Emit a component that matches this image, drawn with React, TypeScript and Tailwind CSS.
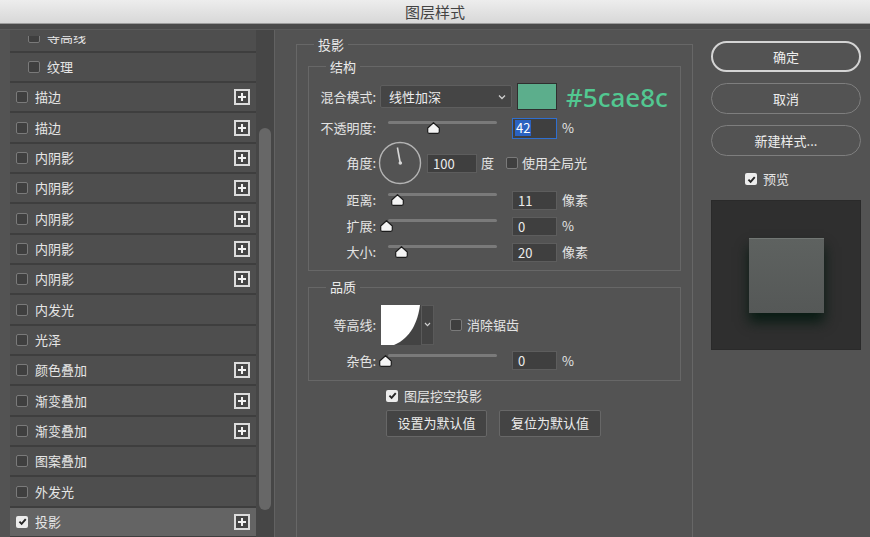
import React from 'react';

type LayerRow = { label: string; sub?: boolean; plus?: boolean; checked?: boolean };

const layerRows: LayerRow[] = [
  { label: '等高线', sub: true },
  { label: '纹理', sub: true },
  { label: '描边', plus: true },
  { label: '描边', plus: true },
  { label: '内阴影', plus: true },
  { label: '内阴影', plus: true },
  { label: '内阴影', plus: true },
  { label: '内阴影', plus: true },
  { label: '内阴影', plus: true },
  { label: '内发光' },
  { label: '光泽' },
  { label: '颜色叠加', plus: true },
  { label: '渐变叠加', plus: true },
  { label: '渐变叠加', plus: true },
  { label: '图案叠加' },
  { label: '外发光' },
  { label: '投影', plus: true, checked: true },
];

function Check({ checked }: { checked?: boolean }) {
  if (checked) {
    return (
      <span className="w-[12px] h-[12px] rounded-[2px] bg-[#ececec] flex items-center justify-center shrink-0">
        <svg width="9" height="9" viewBox="0 0 10 10">
          <path d="M1.6 5.2 L4 7.6 L8.6 2.3" fill="none" stroke="#262626" strokeWidth="2.1" />
        </svg>
      </span>
    );
  }
  return <span className="block w-[12px] h-[12px] rounded-[2px] border border-[#7a7a7a] bg-[#3f3f3f] shrink-0" />;
}

function PlusBox() {
  return (
    <span className="w-[16px] h-[16px] border-2 border-[#dcdcdc] bg-[#464646] flex items-center justify-center shrink-0">
      <svg width="10" height="10" viewBox="0 0 10 10">
        <path d="M5 1v8M1 5h8" stroke="#f2f2f2" strokeWidth="2" />
      </svg>
    </span>
  );
}

function Slider({ thumb }: { thumb: string }) {
  return (
    <div className="relative w-[111px] h-[20px] shrink-0">
      <div className="absolute left-[2px] right-0 top-[3px] h-[3px] rounded-full bg-[#7a7a7a]" />
      <svg className={`absolute top-[4px] ${thumb}`} width="13" height="12" viewBox="0 0 13 12">
        <path
          d="M6.5 0.7 L12.3 6 V9.8 Q12.3 11.3 10.8 11.3 H2.2 Q0.7 11.3 0.7 9.8 V6 Z"
          fill="#f4f4f4"
          stroke="#1c1c1c"
          strokeWidth="1.2"
        />
      </svg>
    </div>
  );
}

function NumBox({ value, width = 'w-[45px]' }: { value: string; width?: string }) {
  return (
    <div className={`${width} h-[19px] bg-[#3f3f3f] border border-[#5d5d5d] pl-[5px] text-[13px] leading-[17px] text-[#ececec] shrink-0`}>
      {value}
    </div>
  );
}

function Label({ text }: { text: string }) {
  return <div className="w-[67px] text-right shrink-0">{text}</div>;
}

function SliderRow({ label, value, unit, thumb, gap }: { label: string; value: string; unit: string; thumb: string; gap: string }) {
  return (
    <div className={`flex items-center h-[20px] ${gap}`}>
      <Label text={label} />
      <div className="ml-[10px]">
        <Slider thumb={thumb} />
      </div>
      <div className="ml-[15px]">
        <NumBox value={value} />
      </div>
      <span className="ml-[5px]">{unit}</span>
    </div>
  );
}

function RoundButton({ text, strong }: { text: string; strong?: boolean }) {
  return (
    <div
      className={`w-[150px] h-[31px] rounded-full flex items-center justify-center text-[13px] text-[#eeeeee] ${
        strong ? 'border-2 border-[#d4d4d4]' : 'border-[1.5px] border-[#7e7e7e]'
      }`}
    >
      {text}
    </div>
  );
}

export default function App() {
  return (
    <div className="w-[870px] h-[537px] overflow-hidden bg-[#535353] flex flex-col text-[13px] leading-[16px] text-[#e4e4e4] font-['Noto_Sans_CJK_SC','Noto_Sans',sans-serif]">
      <div className="h-[24px] shrink-0 bg-gradient-to-b from-[#ededed] to-[#d8d8d8] border-b border-[#9c9c9c] flex items-center justify-center text-[15px] text-[#434343]">
        图层样式
      </div>
      <div className="h-[6px] shrink-0 bg-[#4a4a4a] border-b border-[#5a5a5a]" />

      <div className="flex flex-1 min-h-0">
        {/* layer effect list */}
        <div className="w-[275px] shrink-0 flex pl-[10px] border-r border-[#626262]">
          <div className="w-[246px] flex flex-col bg-[#4e4e4e] pt-[6px]">
            <div className="flex-1 min-h-0 overflow-hidden bg-[#3e3e3e]">
              <div className="-mt-[13.5px]">
                {layerRows.map((r, i) => (
                  <div
                    key={i}
                    className={`h-[30.33px] border-b-2 border-[#3e3e3e] flex items-center pr-[6px] ${
                      r.sub ? 'pl-[18px]' : 'pl-[6px]'
                    } ${r.checked ? 'bg-[#646464]' : 'bg-[#4e4e4e]'}`}
                  >
                    <Check checked={r.checked} />
                    <span className="ml-[7px] flex-1 text-[#e6e6e6]">{r.label}</span>
                    {r.plus && <PlusBox />}
                  </div>
                ))}
              </div>
            </div>
          </div>
          <div className="w-[18px] bg-[#464646] pl-[3px] pt-[98px]">
            <div className="w-[12px] h-[382px] rounded-full bg-[#676767]" />
          </div>
        </div>

        {/* settings */}
        <div className="w-[418px] shrink-0 pt-[6.5px]">
          <fieldset className="ml-[21px] w-[397px] h-[520px] border border-[#676767]">
            <legend className="ml-[17px] px-[4px] leading-[16px] text-[#ebebeb]">投影</legend>

            <fieldset className="ml-[11px] mt-[6px] w-[373px] border border-[#676767] pb-[8px]">
              <legend className="ml-[17px] px-[4px] leading-[16px] text-[#ebebeb]">结构</legend>

              <div className="flex items-center h-[27px] mt-[8.5px]">
                <Label text="混合模式:" />
                <div className="ml-[4px] w-[132px] h-[23px] bg-[#454545] border border-[#5e5e5e] rounded-[2px] flex items-center pl-[8px] pr-[5px] text-[#ececec]">
                  <span className="flex-1">线性加深</span>
                  <svg width="8" height="6" viewBox="0 0 8 6">
                    <path d="M1 1.5 L4 4.5 L7 1.5" fill="none" stroke="#cfcfcf" strokeWidth="1.3" />
                  </svg>
                </div>
                <div className="ml-[5px] w-[40px] h-[27px] bg-[#5cae8c] border border-[#2f2f2f] shrink-0" />
                <span className="ml-[9px] font-['Noto_Sans',sans-serif] font-medium text-[26px] leading-[28px] text-[#52c891]">
                  #5cae8c
                </span>
              </div>

              <div className="flex items-center h-[20px] mt-[8px]">
                <Label text="不透明度:" />
                <div className="ml-[10px]">
                  <Slider thumb="left-[40.5px]" />
                </div>
                <div className="ml-[15px] w-[45px] h-[21px] bg-[#3f3f3f] border border-[#2f6fd0] flex items-center pl-[2px] shrink-0">
                  <span className="bg-[#2b62c0] text-white px-[1px] leading-[16px]">42</span>
                </div>
                <span className="ml-[5px]">%</span>
              </div>

              <div className="flex items-center h-[44px] mt-[3px]">
                <Label text="角度:" />
                <svg className="ml-[2px] shrink-0" width="44" height="44" viewBox="0 0 44 44">
                  <circle cx="22" cy="22" r="20.5" fill="none" stroke="#b4b4b4" strokeWidth="1.4" />
                  <path d="M22.3 22 L19.4 6.5" stroke="#d8d8d8" strokeWidth="1.6" />
                  <circle cx="22.3" cy="22" r="1.8" fill="#d8d8d8" />
                </svg>
                <div className="ml-[5px]">
                  <NumBox value="100" width="w-[50px]" />
                </div>
                <span className="ml-[4px]">度</span>
                <div className="ml-[12px]">
                  <Check />
                </div>
                <span className="ml-[4px]">使用全局光</span>
              </div>

              <SliderRow label="距离:" value="11" unit="像素" thumb="left-[4.5px]" gap="mt-[5px]" />
              <SliderRow label="扩展:" value="0" unit="%" thumb="-left-[6.5px]" gap="mt-[6px]" />
              <SliderRow label="大小:" value="20" unit="像素" thumb="left-[9px]" gap="mt-[6px]" />
            </fieldset>

            <fieldset className="ml-[11px] mt-[8px] w-[373px] border border-[#676767] pb-[9px]">
              <legend className="ml-[17px] px-[4px] leading-[16px] text-[#ebebeb]">品质</legend>

              <div className="flex items-center h-[40px] mt-[9.5px]">
                <Label text="等高线:" />
                <div className="ml-[5px] flex h-[40px] shrink-0">
                  <svg width="40" height="40" viewBox="0 0 40 40">
                    <rect width="40" height="40" fill="#434343" />
                    <path d="M0 0 H39 C37 16 30 33 13 40 H0 Z" fill="#ffffff" />
                  </svg>
                  <div className="w-[13px] h-[40px] bg-[#444444] border border-[#5a5a5a] flex items-center justify-center">
                    <svg width="7" height="5" viewBox="0 0 7 5">
                      <path d="M1 1 L3.5 3.6 L6 1" fill="none" stroke="#cfcfcf" strokeWidth="1.2" />
                    </svg>
                  </div>
                </div>
                <div className="ml-[16px]">
                  <Check />
                </div>
                <span className="ml-[5px]">消除锯齿</span>
              </div>

              <SliderRow label="杂色:" value="0" unit="%" thumb="-left-[6.8px]" gap="mt-[6px]" />
            </fieldset>

            <div className="flex items-center h-[14px] mt-[8px] ml-[89px]">
              <Check checked />
              <span className="ml-[6px]">图层挖空投影</span>
            </div>

            <div className="flex mt-[7px] ml-[89px]">
              <div className="w-[101px] h-[27px] bg-[#444444] border border-[#676767] rounded-[2px] flex items-center justify-center text-[#ececec]">
                设置为默认值
              </div>
              <div className="ml-[12px] w-[102px] h-[27px] bg-[#444444] border border-[#676767] rounded-[2px] flex items-center justify-center text-[#ececec]">
                复位为默认值
              </div>
            </div>
          </fieldset>
        </div>

        {/* actions + preview */}
        <div className="pl-[18px] pt-[11px] flex flex-col">
          <RoundButton text="确定" strong />
          <div className="mt-[11px]">
            <RoundButton text="取消" />
          </div>
          <div className="mt-[11px]">
            <RoundButton text="新建样式..." />
          </div>
          <div className="flex items-center h-[14px] mt-[16px] ml-[34px]">
            <Check checked />
            <span className="ml-[6px]">预览</span>
          </div>
          <div className="mt-[14px] w-[150px] h-[150px] bg-[#2f2f2f] border border-[#2a2a2a] flex items-center justify-center">
            <div className="w-[75px] h-[75px] bg-gradient-to-b from-[#5e6260] to-[#555857] border-t border-[#727774] shadow-[0_9px_12px_rgba(6,26,18,0.95)]" />
          </div>
        </div>
      </div>
    </div>
  );
}
